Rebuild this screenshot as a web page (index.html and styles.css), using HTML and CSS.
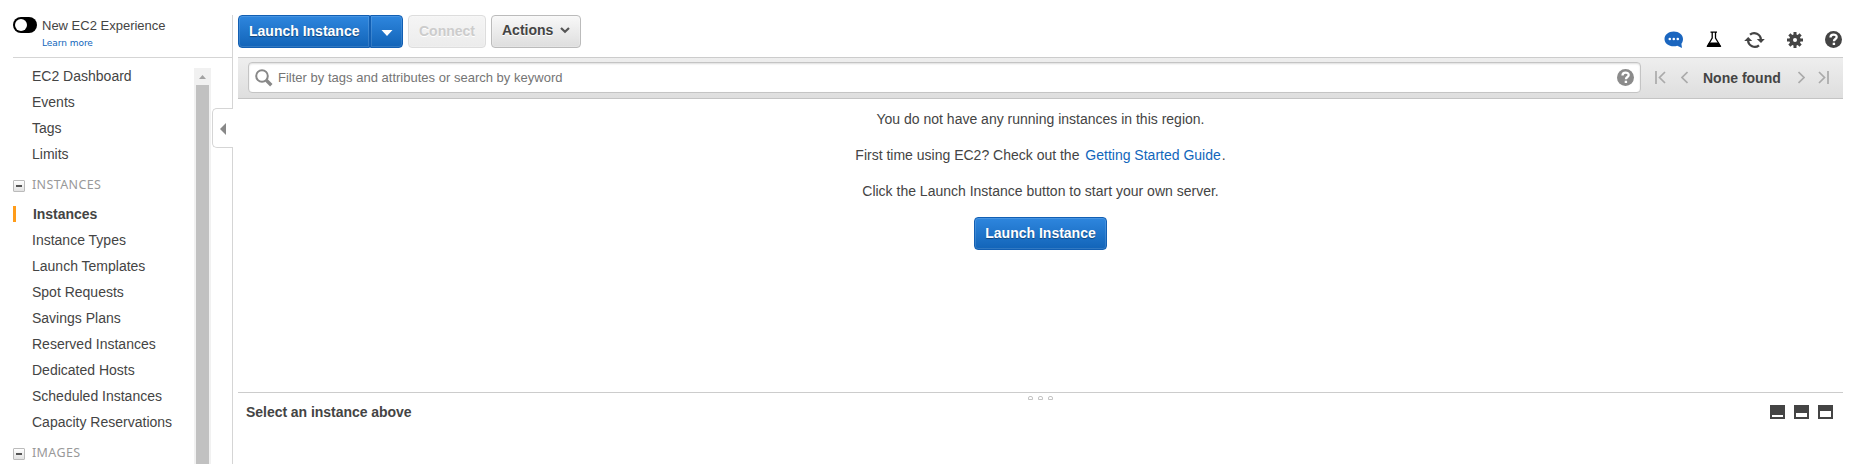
FILE: index.html
```html
<!DOCTYPE html>
<html lang="en">
<head>
<meta charset="utf-8">
<title>EC2 Management Console</title>
<link rel="stylesheet" href="styles.css">
</head>
<body>
<div class="app">
  <aside class="sidebar">
    <div class="experience">
      <span class="toggle"><i></i></span>
      <div class="experience-text"><span class="experience-title">New EC2 Experience</span><a class="learn">Learn more</a></div>
    </div>
    <div class="nav-wrap">
      <nav class="nav">
        <a class="item">EC2 Dashboard</a>
        <a class="item">Events</a>
        <a class="item">Tags</a>
        <a class="item">Limits</a>
        <div class="group"><span class="minus"></span><span class="group-name">INSTANCES</span></div>
        <a class="item active">Instances</a>
        <a class="item">Instance Types</a>
        <a class="item">Launch Templates</a>
        <a class="item">Spot Requests</a>
        <a class="item">Savings Plans</a>
        <a class="item">Reserved Instances</a>
        <a class="item">Dedicated Hosts</a>
        <a class="item">Scheduled Instances</a>
        <a class="item">Capacity Reservations</a>
        <div class="group"><span class="minus"></span><span class="group-name">IMAGES</span></div>
      </nav>
      <div class="scroll">
        <svg width="17" height="17" viewBox="0 0 17 17"><path d="M5 11h7L8.500 7z" fill="#a3a3a3"/></svg>
        <div class="thumb"></div>
      </div>
    </div>
    <div class="collapse"><svg width="6" height="12" viewBox="0 0 6 12"><path d="M6 0v12L0 6z" fill="#888"/></svg></div>
  </aside>
  <main class="main">
    <div class="toolbar">
      <div class="split">
        <button class="btn primary split-main">Launch Instance</button>
        <button class="btn primary split-arrow"><svg width="12" height="6" viewBox="0 0 12 6"><path d="M.5 0h11L6 6z" fill="#fff"/></svg></button>
      </div>
      <button class="btn disabled">Connect</button>
      <button class="btn actions">Actions <svg width="10" height="7" viewBox="0 0 10 7"><path d="M1 1l4 3.800L9 1" fill="none" stroke="#555" stroke-width="2.200"/></svg></button>
      <div class="tools">
        <svg width="20" height="18" viewBox="0 0 20 18"><path d="M9.700.5C4.500.5.500 3.700.500 8s4 7.300 9.200 7.300c1.300 0 2.500-.2 3.600-.6L18 17l-.6-4.300C18.500 11.400 19 9.800 19 8c0-4.300-4-7.500-9.300-7.500z" fill="#1b66bf"/><circle cx="5.800" cy="8" r="1.300" fill="#fff"/><circle cx="9.800" cy="8" r="1.300" fill="#fff"/><circle cx="13.800" cy="8" r="1.300" fill="#fff"/></svg>
        <svg width="16" height="17" viewBox="0 0 16 17"><path d="M4.500 1.200h6.500M6.200 1v6L1.800 14.500h12.200L9.500 7V1" fill="none" stroke="#000" stroke-width="1.300"/><path d="M3.200 11.500h9.400l2.700 4.500H.500z"/></svg>
        <svg width="21" height="18" viewBox="0 0 21 18"><path d="M6 3.700A6.700 6.700 0 0 1 16.900 8.500M15 14.300A6.700 6.700 0 0 1 4.100 9.500" fill="none" stroke="#444" stroke-width="2.300"/><path d="M12.800 8h8L17 12zM.2 10h8L4.200 6z" fill="#444"/></svg>
        <svg width="16" height="16" viewBox="0 0 16 16"><path d="M6.500 0h3v2.400l1.200.5 1.800-1.700 2.200 2.200-1.700 1.800.5 1.300H16v3h-2.500l-.5 1.200 1.700 1.900-2.200 2.100-1.800-1.600-1.200.5V16h-3v-2.400l-1.200-.5-1.900 1.600-2.100-2.100L3 10.700l-.5-1.200H0v-3h2.500L3 5.200 1.300 3.400l2.100-2.200 1.900 1.700 1.200-.5z" fill="#444"/><circle cx="8" cy="8" r="2" fill="#fff"/></svg>
        <svg width="17" height="17" viewBox="0 0 17 17"><circle cx="8.500" cy="8.500" r="8.500" fill="#444"/><path d="M5.500 6.500c0-4 6.200-3.700 6.200-.5 0 2-2.800 2-2.800 4.300" fill="none" stroke="#fff" stroke-width="2.300"/><path d="M7.700 11.700h2.400v2.300H7.700z" fill="#fff"/></svg>
      </div>
    </div>
    <div class="filter">
      <div class="search">
        <svg width="18" height="18" viewBox="0 0 18 18"><circle cx="7" cy="7" r="5.800" fill="none" stroke="#888" stroke-width="2"/><path d="M11.300 11.300l5 5" stroke="#888" stroke-width="3.400"/></svg>
        <span class="placeholder">Filter by tags and attributes or search by keyword</span>
        <svg width="17" height="17" viewBox="0 0 17 17"><circle cx="8.500" cy="8.500" r="8.500" fill="#8b8b8b"/><path d="M5.500 6.500c0-4 6.200-3.700 6.200-.5 0 2-2.800 2-2.800 4.300" fill="none" stroke="#fff" stroke-width="2.300"/><path d="M7.700 11.700h2.400v2.300H7.700z" fill="#fff"/></svg>
      </div>
      <div class="pager">
        <svg class="first" width="11" height="13" viewBox="0 0 11 13"><path d="M1 0v13M10 1L4.500 6.500 10 12" fill="none" stroke="#aaa" stroke-width="1.700"/></svg>
        <svg class="prev" width="7" height="13" viewBox="0 0 7 13"><path d="M6.500 1L1 6.500 6.500 12" fill="none" stroke="#aaa" stroke-width="1.700"/></svg>
        <span class="found">None found</span>
        <svg class="next" width="7" height="13" viewBox="0 0 7 13"><path d="M.5 1L6 6.500.500 12" fill="none" stroke="#aaa" stroke-width="1.700"/></svg>
        <svg width="11" height="13" viewBox="0 0 11 13"><path d="M10 0v13M1 1l5.500 5.500L1 12" fill="none" stroke="#aaa" stroke-width="1.700"/></svg>
      </div>
    </div>
    <section class="empty">
      <p>You do not have any running instances in this region.</p>
      <p>First time using EC2? Check out the <a class="guide">Getting Started Guide</a>.</p>
      <p>Click the Launch Instance button to start your own server.</p>
      <button class="btn primary">Launch Instance</button>
    </section>
    <section class="details">
      <div class="grip"><i></i><i></i><i></i></div>
      <div class="details-head">
        <span class="select">Select an instance above</span>
        <div class="panes"><span class="pane small"><i></i></span><span class="pane half"><i></i></span><span class="pane full"><i></i></span></div>
      </div>
    </section>
  </main>
</div>
</body>
</html>
```

FILE: styles.css
```css
* { box-sizing: border-box; }
body { margin: 0; background: #fff; color: #444; font: 14px "Liberation Sans", Arial, sans-serif; overflow: hidden; }
svg { display: block; flex: none; }
p { margin: 0; }
.app { display: flex; height: 464px; padding-top: 15px; }
.sidebar { position: relative; width: 233px; flex: none; border-right: 1px solid #d5d5d5; display: flex; flex-direction: column; }
.experience { display: flex; gap: 5px; margin-left: 13px; height: 43px; padding-top: 2px; border-bottom: 1px solid #d5d5d5; }
.toggle { width: 24px; height: 16px; border-radius: 8px; background: #000; padding: 2px; }
.toggle i { display: block; width: 12px; height: 12px; border-radius: 50%; background: #fff; }
.experience-text { display: flex; flex-direction: column; }
.experience-title { font-size: 13px; line-height: 17px; }
.learn { font: 9px/18px "DejaVu Sans", sans-serif; letter-spacing: -.05px; color: #1166bb; }
.nav-wrap { display: flex; flex: 1; min-height: 0; overflow: hidden; }
.nav { width: 194px; flex: none; padding: 5px 0 0 13px; }
.item { display: block; height: 26px; line-height: 26px; padding-left: 19px; white-space: nowrap; }
.item.active { height: 16px; line-height: 16px; margin: 4px 0 5px; border-left: 3px solid #ff9c1a; padding-left: 17px; font-weight: bold; letter-spacing: -.05px; }
.group { display: flex; align-items: center; gap: 7px; height: 35px; padding: 1px 0 0; }
.group-name { font: 12.5px/20px "Noto Sans", sans-serif; letter-spacing: .38px; color: #999; margin-top: -1px; }
.minus { width: 12px; height: 12px; margin-top: 2px; border: 1px solid #bbb; border-radius: 1px; background: linear-gradient(#fff, #e2e2e2); display: flex; align-items: center; justify-content: center; }
.minus::after { content: ""; width: 6px; height: 2px; background: #555; }
.scroll { width: 17px; margin-top: 10px; background: #f1f1f1; }
.thumb { width: 13px; height: 500px; margin-left: 2px; background: #c1c1c1; }
.collapse { position: absolute; right: -1px; top: 93px; width: 21px; height: 40px; border: 1px solid #d5d5d5; border-right: 0; border-radius: 5px 0 0 5px; background: #fff; padding: 14px 0 0 7px; }
.main { flex: 1; margin: 0 6px 0 5px; display: flex; flex-direction: column; min-width: 0; }
.toolbar { display: flex; height: 42px; gap: 5px; }
.btn { height: 33px; border: 1px solid #bbb; border-radius: 4px; padding: 0 10px; font: bold 14px/29px "Liberation Sans", Arial, sans-serif; color: #444; background: linear-gradient(#f8f8f8, #dedede); box-shadow: inset 0 0 0 1px rgba(255,255,255,.2); white-space: nowrap; }
.primary { color: #fff; border-color: #125fb3; background: linear-gradient(#2e86de, #1264b8); text-shadow: 0 1px 1px rgba(0,0,0,.4); box-shadow: inset 0 0 0 1px rgba(255,255,255,.13); }
.split { display: flex; }
.split-main { width: 132px; border-radius: 4px 0 0 4px; }
.split-arrow { width: 33px; border-radius: 0 4px 4px 0; padding: 2px 0 0 10px; }
.disabled { width: 78px; color: #ccc; border-color: #ddd; background: linear-gradient(#f5f5f5, #ececec); text-shadow: 0 1px 0 #fff; }
.actions { width: 90px; display: flex; gap: 7px; text-shadow: 0 1px 0 #fff; }
.actions svg { margin-top: 11px; }
.tools { margin: 0 1px 0 auto; display: flex; align-items: center; gap: 22px; padding-top: 7px; }
.filter { height: 42px; border-top: 1px solid #ccc; border-bottom: 1px solid #c4c4c4; background: linear-gradient(#eee, #dedede); display: flex; padding: 4px 14px 0 10px; }
.search { width: 1393px; flex: none; height: 31px; border: 1px solid #c4c4c4; border-radius: 4px; background: #fff; box-shadow: inset 0 1px 2px #ddd; display: flex; align-items: center; padding: 0 6px; }
.placeholder { flex: 1; margin-left: 5px; font-size: 13px; color: #757575; letter-spacing: .01px; }
.pager { display: flex; align-items: center; flex: 1; height: 31px; margin-left: 14px; }
.prev { margin-left: 15px; }
.found { margin-left: 15px; font-weight: bold; }
.next { margin-left: auto; margin-right: 13px; }
.empty { height: 293px; display: flex; flex-direction: column; align-items: center; padding-top: 2px; line-height: 36px; }
.empty .btn { margin-top: 8px; width: 133px; }
.guide { color: #1166bb; margin: 0 1px 0 2px; }
.details { border-top: 1px solid #ccc; flex: 1; }
.grip { height: 8px; display: flex; justify-content: center; gap: 5px; padding-top: 3px; }
.grip i { width: 5px; height: 4px; border: 1px solid #c4c4c4; border-radius: 2px 2px 0 0; }
.details-head { display: flex; justify-content: space-between; padding: 4px 10px 0 8px; }
.select { font-weight: bold; line-height: 14px; letter-spacing: -.04px; }
.panes { display: flex; gap: 9px; }
.pane { width: 15px; height: 14px; background: #444; padding: 2px; display: flex; align-items: flex-end; }
.pane i { width: 11px; background: #fff; }
.small i { height: 2px; }
.half i { height: 4px; }
.full i { height: 6px; }
```
